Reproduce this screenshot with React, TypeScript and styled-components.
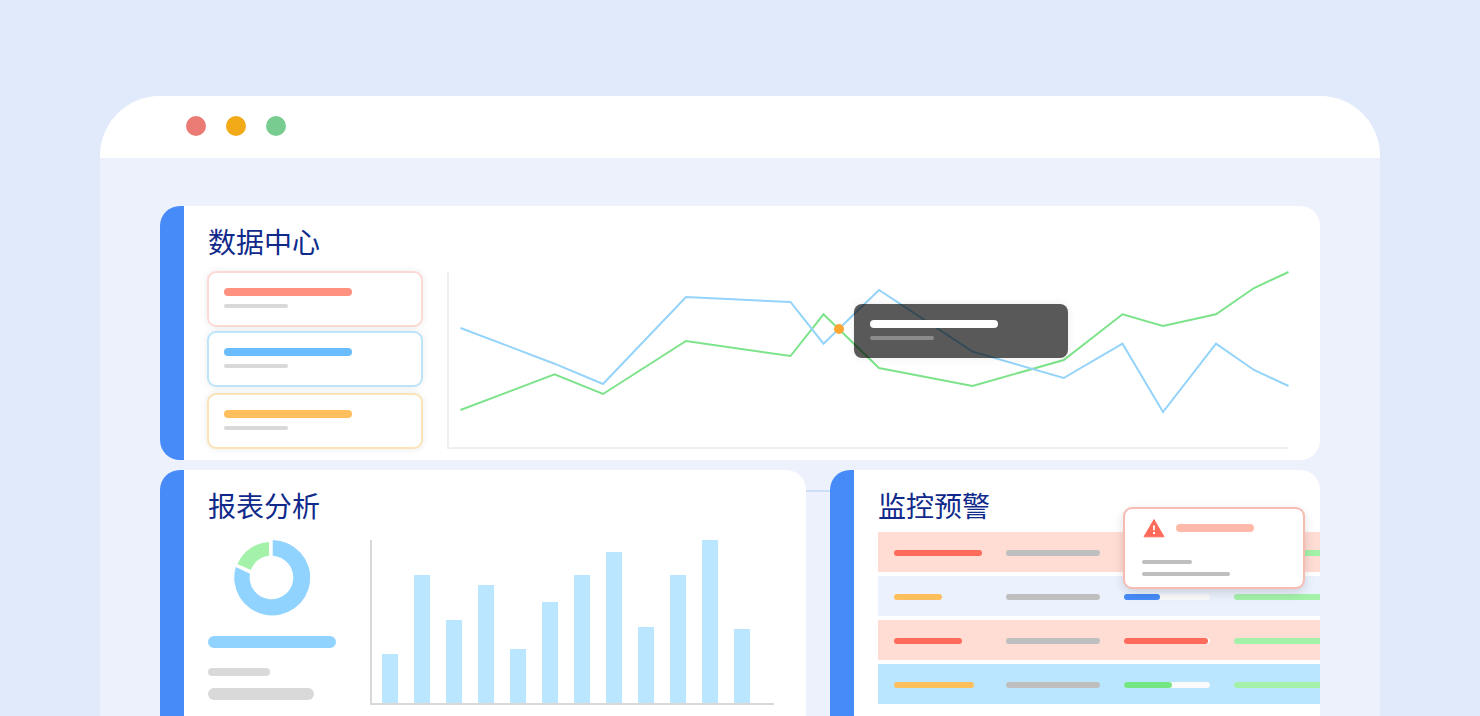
import React from "react";
import styled, { createGlobalStyle } from "styled-components";

const color = {
  page: "#e0eafb",
  body: "#edf1fc",
  rail: "#468bf8",
  title: "#102a8b",
  grey: "#d9d9d9",
  greyDark: "#bfbfbf",
  axis: "#efefef",
  sky: "#91d3ff",
  pale: "#bae6ff",
  red: "#ff6b5b",
  orange: "#ffbf5c",
  green: "#75e684",
  mint: "#a4f2aa",
};

const GlobalStyle = createGlobalStyle`
  *, *::before, *::after { box-sizing: border-box; }
  body {
    margin: 0;
    background: ${color.page};
    font-family: "Noto Sans CJK SC", "Noto Sans", sans-serif;
  }
`;

const Page = styled.div`
  display: flex;
  flex-direction: column;
  min-height: 100vh;
  padding: 96px 100px 0;
`;

const Window = styled.div`
  flex: 1;
  display: flex;
  flex-direction: column;
  overflow: hidden;
  border-radius: 60px 60px 0 0;
  background: ${color.body};
`;

const TitleBar = styled.header`
  display: flex;
  gap: 20px;
  padding: 20px 86px 22px;
  background: #fff;
`;

const WindowButton = styled.button<{ $color: string }>`
  width: 20px;
  height: 20px;
  padding: 0;
  border: 0;
  border-radius: 50%;
  background: ${(p) => p.$color};
`;

const Dashboard = styled.main`
  flex: 1;
  display: flex;
  flex-direction: column;
  gap: 10px;
  padding: 48px 60px 0;
`;

const LowerRow = styled.div`
  flex: 1;
  display: grid;
  grid-template-columns: minmax(0, 646fr) 24px minmax(0, 490fr);
`;

const Connector = styled.div`
  height: 2px;
  margin-top: 20px;
  background: #cddff8;
`;

const Panel = styled.section<{ $open?: boolean; $gap: number }>`
  position: relative;
  display: flex;
  flex-direction: column;
  gap: ${(p) => p.$gap}px;
  overflow: hidden;
  padding: 20px 0 12px 24px;
  border-left: 24px solid ${color.rail};
  border-radius: ${(p) => (p.$open ? "20px 20px 0 0" : "20px")};
  background: #fff;
`;

const Title = styled.h2`
  margin: 0;
  font-size: 28px;
  line-height: 30px;
  font-weight: 400;
  color: ${color.title};
`;

const Bar = styled.div<{ $w: number; $h: number; $color: string }>`
  width: ${(p) => p.$w}px;
  height: ${(p) => p.$h}px;
  border-radius: 6px;
  background: ${(p) => p.$color};
`;

/* Data centre */

const TrendLayout = styled.div`
  display: grid;
  grid-template-columns: 214px minmax(0, 1fr);
  gap: 24px;
  padding-right: 32px;
`;

const StatList = styled.div`
  display: flex;
  flex-direction: column;
  gap: 6px;
`;

const StatCard = styled.div<{ $edge?: string }>`
  display: flex;
  flex-direction: column;
  gap: 8px;
  width: 214px;
  height: 54px;
  padding: 16px;
  border-radius: 8px;
  outline: 2px solid ${(p) => p.$edge};
  outline-offset: -1px;
  background: #fff;
  box-shadow: 0 0 8px rgba(0, 0, 0, 0.1);

  &:last-child {
    margin-top: auto;
  }
`;

const TrendChart = styled.div`
  position: relative;
  height: 176px;
`;

const TrendSvg = styled.svg`
  display: block;
  width: 100%;
  height: 100%;
  overflow: visible;
`;

const Tooltip = styled.div`
  position: absolute;
  top: 32px;
  left: 48.46%;
  display: flex;
  flex-direction: column;
  gap: 8px;
  width: 214px;
  height: 54px;
  padding: 16px;
  border-radius: 8px;
  background: rgba(0, 0, 0, 0.65);
  box-shadow: 0 0 8px rgba(0, 0, 0, 0.08);
`;

/* Report analysis */

const ReportLayout = styled.div`
  display: grid;
  grid-template-columns: 128px minmax(0, 1fr);
  gap: 34px;
  padding-right: 32px;
`;

const Summary = styled.div`
  display: flex;
  flex-direction: column;
  gap: 20px;
`;

const SummaryLines = styled.div`
  display: flex;
  flex-direction: column;
  gap: 12px;
`;

const Donut = styled.svg`
  display: block;
  width: 76px;
  height: 76px;
  align-self: center;
`;

const Columns = styled.div`
  display: flex;
  align-items: flex-end;
  gap: 16px;
  height: 165px;
  padding: 0 24px 0 10px;
  border-left: 2px solid ${color.grey};
  border-bottom: 2px solid ${color.grey};
`;

const Column = styled.div<{ $h: number }>`
  flex: 1;
  height: ${(p) => p.$h}px;
  background: ${color.pale};
`;

/* Monitoring */

const AlertTable = styled.table`
  width: 100%;
  table-layout: fixed;
  border-collapse: separate;
  border-spacing: 0 4px;
`;

const AlertRow = styled.tr<{ $bg: string }>`
  background: ${(p) => p.$bg};
`;

const Cell = styled.td`
  padding: 18px 0 16px;

  &:first-child {
    padding-left: 16px;
  }
`;

const Track = styled.div`
  width: 86px;
  height: 6px;
  border-radius: 6px;
  background: #fafafa;
`;

const FullBar = styled.div`
  height: 6px;
  border-radius: 6px 0 0 6px;
  background: ${color.mint};
`;

const AlertPopup = styled.aside`
  position: absolute;
  top: 38px;
  right: 16px;
  display: flex;
  flex-direction: column;
  gap: 8px;
  width: 180px;
  height: 80px;
  padding: 8px 18px;
  border-radius: 8px;
  outline: 2px solid #f8bbb2;
  outline-offset: -1px;
  background: #fff;
  box-shadow: 0 4px 12px rgba(0, 0, 0, 0.16);
`;

const PopupHead = styled.div`
  display: flex;
  align-items: center;
  gap: 10px;
  height: 24px;
  margin-bottom: 12px;
`;

const GREEN_LINE =
  "14.5,138 108.5,102.3 157,122 240,69 344.5,84 377.5,42.3 433,96 526.5,114 617.7,88 676.5,42.3 717,54 770,42.3 808,16 842.5,0";
const BLUE_LINE =
  "14.5,56 108.5,91.7 157,112 240,25 344.5,30 377.5,71.7 433,18 526.5,79.7 617.7,106 676.5,71.7 717,140 770,71.7 808,98 842.5,114";

const STATS = [
  { edge: "#fbdad5", bar: "#ff9180" },
  { edge: "#bee4f9", bar: "#69bdff" },
  { edge: "#fae3b6", bar: "#ffbf5c" },
];

const COLUMNS = [49, 128, 83, 118, 54, 101, 128, 151, 76, 128, 163, 74];

const ALERTS = [
  { bg: "#ffdcd4", level: color.red, width: 88, progress: "#468bf8", done: 60 },
  { bg: "#ebf2fe", level: color.orange, width: 48, progress: "#468bf8", done: 36 },
  { bg: "#ffdcd4", level: color.red, width: 68, progress: color.red, done: 84 },
  { bg: color.pale, level: color.orange, width: 80, progress: color.green, done: 48 },
];

function DataCenter() {
  return (
    <Panel $gap={16}>
      <Title>数据中心</Title>
      <TrendLayout>
        <StatList>
          {STATS.map((s) => (
            <StatCard key={s.bar} $edge={s.edge}>
              <Bar $w={128} $h={8} $color={s.bar} />
              <Bar $w={64} $h={4} $color={color.grey} />
            </StatCard>
          ))}
        </StatList>
        <TrendChart>
          <TrendSvg viewBox="0 0 842 176" preserveAspectRatio="none" fill="none" strokeWidth="2">
            <path d="M2 0V176H842" stroke={color.axis} />
            <polyline points={GREEN_LINE} stroke="#7de38a" />
            <polyline points={BLUE_LINE} stroke="#94d3fa" />
            <circle cx="393" cy="57" r="5" fill="#ffa633" />
          </TrendSvg>
          <Tooltip>
            <Bar $w={128} $h={8} $color="#fff" />
            <Bar $w={64} $h={4} $color="rgba(255, 255, 255, 0.3)" />
          </Tooltip>
        </TrendChart>
      </TrendLayout>
    </Panel>
  );
}

function Reports() {
  return (
    <Panel $gap={20} $open>
      <Title>报表分析</Title>
      <ReportLayout>
        <Summary>
          <Donut viewBox="0 0 76 76">
            <path
              d="M38.7 0A38 37.7 0 1 1 1.8 27L16 33.7A21.8 21.8 0 1 0 38.7 15.7Z"
              fill={color.sky}
            />
            <path d="M35 2A36 36 0 0 0 3.5 24L16.8 30A22 22 0 0 1 35 15.7Z" fill={color.mint} />
          </Donut>
          <Bar $w={128} $h={12} $color={color.sky} />
          <SummaryLines>
            <Bar $w={62} $h={8} $color={color.grey} />
            <Bar $w={106} $h={12} $color={color.grey} />
          </SummaryLines>
        </Summary>
        <Columns>
          {COLUMNS.map((h, i) => (
            <Column key={i} $h={h} />
          ))}
        </Columns>
      </ReportLayout>
    </Panel>
  );
}

function Monitoring() {
  return (
    <Panel $gap={8} $open>
      <Title>监控预警</Title>
      <AlertTable>
        <colgroup>
          <col width="128" />
          <col width="118" />
          <col width="110" />
          <col />
        </colgroup>
        <tbody>
          {ALERTS.map((a, i) => (
            <AlertRow key={i} $bg={a.bg}>
              <Cell>
                <Bar $w={a.width} $h={6} $color={a.level} />
              </Cell>
              <Cell>
                <Bar $w={94} $h={6} $color={color.greyDark} />
              </Cell>
              <Cell>
                <Track>
                  <Bar $w={a.done} $h={6} $color={a.progress} />
                </Track>
              </Cell>
              <Cell>
                <FullBar />
              </Cell>
            </AlertRow>
          ))}
        </tbody>
      </AlertTable>
      <AlertPopup>
        <PopupHead>
          <svg width="24" height="24" viewBox="0 0 24 24">
            <path
              d="M12 3.6L22 20.8H2Z"
              fill={color.red}
              stroke={color.red}
              strokeWidth="1"
              strokeLinejoin="round"
            />
            <path d="M11 9.5h2l-.3 5h-1.4zM11 16h2v2h-2z" fill="#fff" />
          </svg>
          <Bar $w={78} $h={8} $color="#ffb9ab" />
        </PopupHead>
        <Bar $w={50} $h={4} $color={color.greyDark} />
        <Bar $w={88} $h={4} $color={color.greyDark} />
      </AlertPopup>
    </Panel>
  );
}

export default function App() {
  return (
    <>
      <GlobalStyle />
      <Page>
        <Window>
          <TitleBar>
            <WindowButton $color="#eb7c75" aria-label="关闭" />
            <WindowButton $color="#f2aa18" aria-label="最小化" />
            <WindowButton $color="#79cc90" aria-label="最大化" />
          </TitleBar>
          <Dashboard>
            <DataCenter />
            <LowerRow>
              <Reports />
              <Connector />
              <Monitoring />
            </LowerRow>
          </Dashboard>
        </Window>
      </Page>
    </>
  );
}
